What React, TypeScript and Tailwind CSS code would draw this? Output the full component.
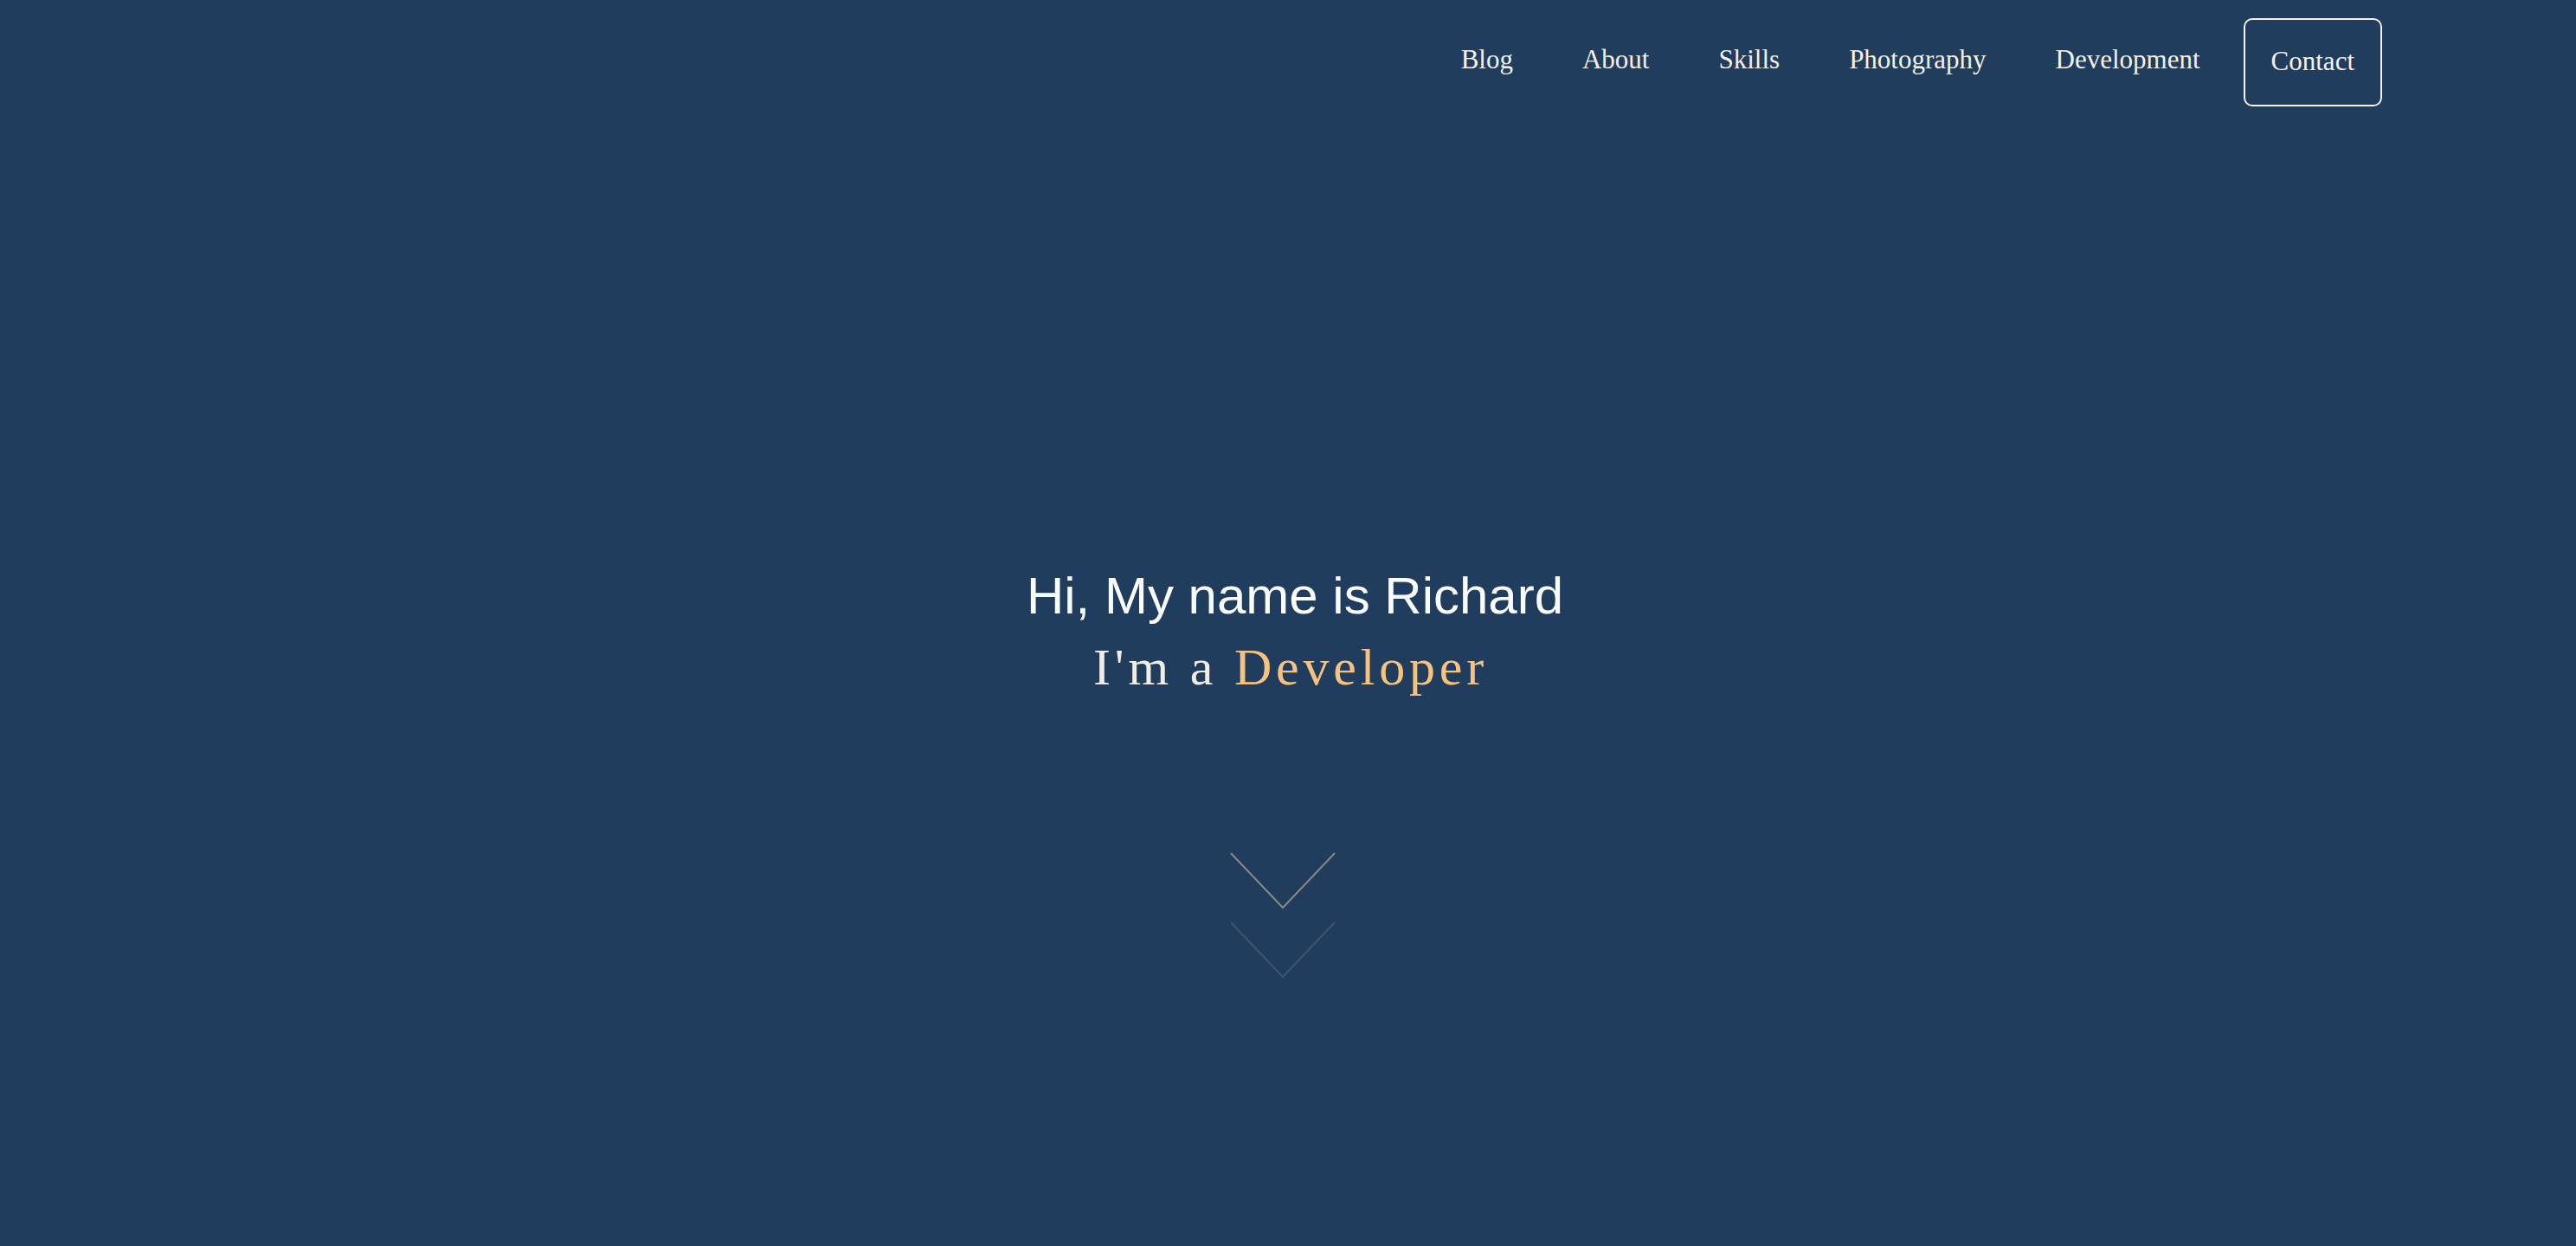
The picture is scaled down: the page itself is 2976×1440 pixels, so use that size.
const links = ['Blog', 'About', 'Skills', 'Photography', 'Development']

function Chevron({ className }: { className: string }) {
  return (
    <svg width="122" height="66" viewBox="0 0 122 66" fill="none" className={className}>
      <polyline points="1,1 61,64 121,1" stroke="currentColor" strokeWidth="2" />
    </svg>
  )
}

export default function App() {
  return (
    <div className="min-h-[1440px] w-full bg-[#213d5e] font-['Liberation_Serif',serif]">
      {/* top navigation */}
      <nav className="flex items-center justify-end pt-[21px] pr-[224px]">
        {links.map(l => (
          <a key={l} className="mb-[8px] px-[40px] text-[31px] leading-none text-[#f3f1ea]">
            {l}
          </a>
        ))}
        <a className="ml-[10px] flex h-[102px] items-center rounded-[10px] border-2 border-[#f3f1ea] px-[30px] pb-[4px] text-[31px] leading-none text-[#f3f1ea]">
          Contact
        </a>
      </nav>

      {/* hero */}
      <section className="flex flex-col items-center pt-[530px]">
        <h1 className="ml-[16px] font-['Liberation_Sans',Arial,sans-serif] text-[60px] leading-[72px] text-[#fafbfc]">
          Hi, My name is Richard
        </h1>
        <p className="mt-[10px] ml-[6px] text-[60px] leading-[72px] tracking-[0.08em] text-[#f0ede4]">
          I'm a <span className="text-[#f5c27f]">Developer</span>
        </p>

        <div className="mt-[178px] mr-[12px] flex flex-col items-center gap-[14px]">
          <Chevron className="text-[#8c8a80]" />
          <Chevron className="text-[#3f5470]" />
        </div>
      </section>
    </div>
  )
}
